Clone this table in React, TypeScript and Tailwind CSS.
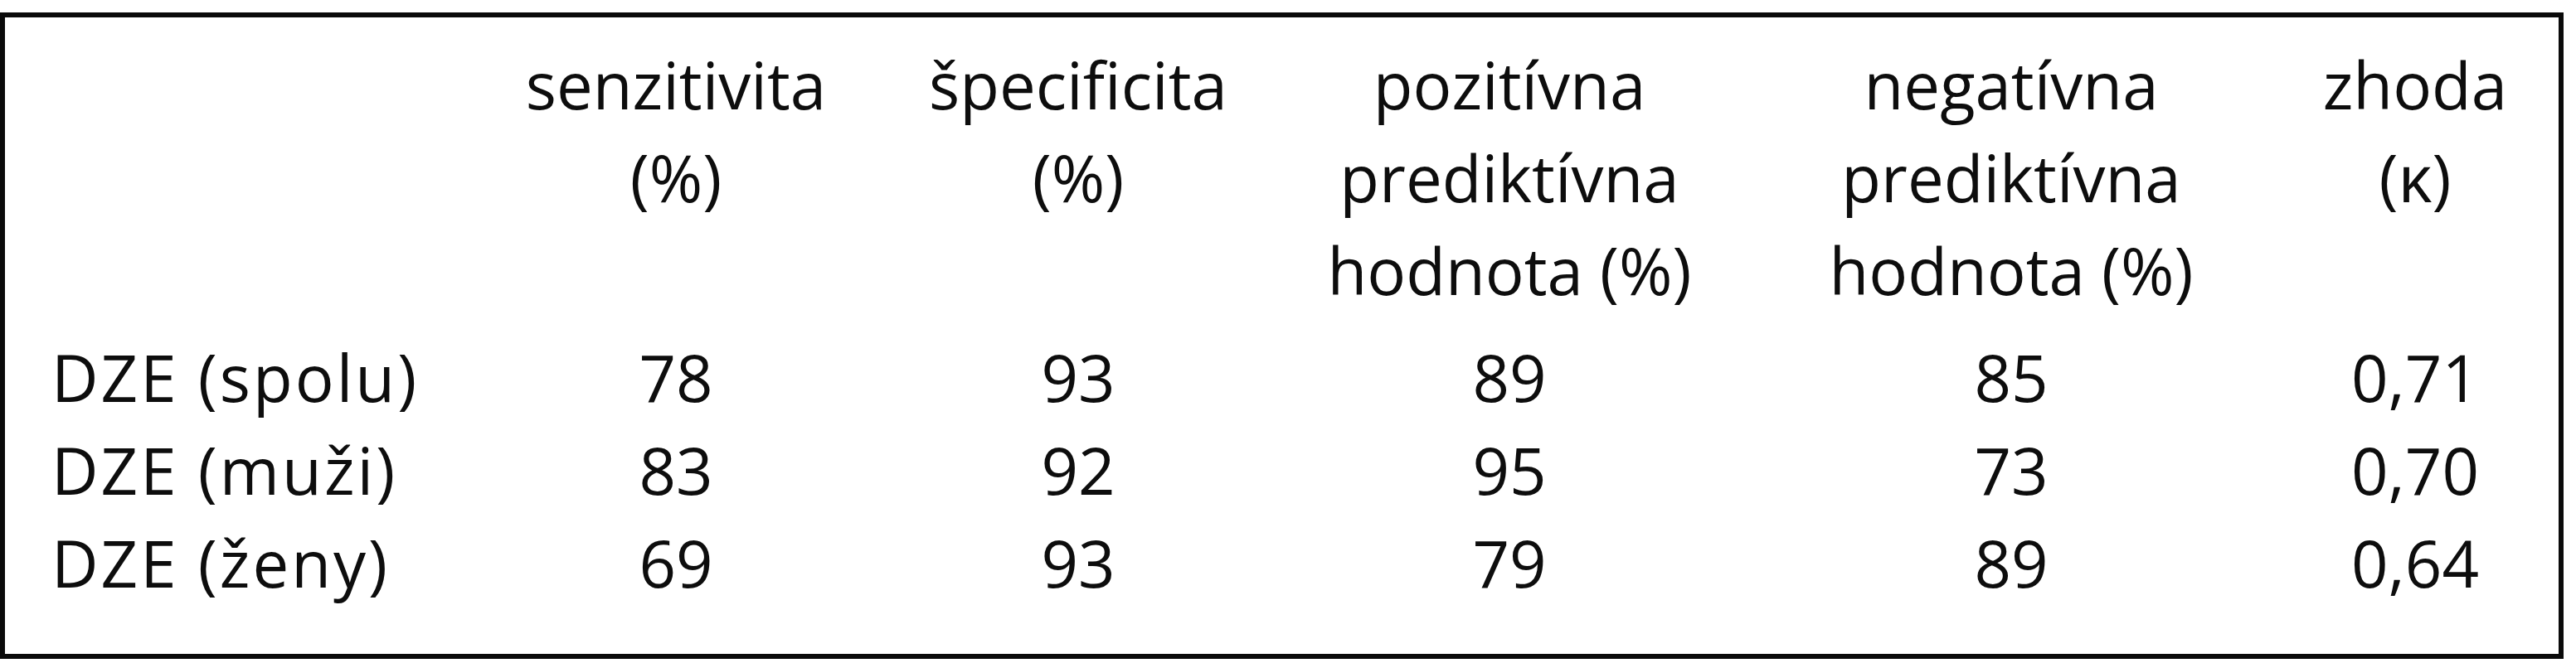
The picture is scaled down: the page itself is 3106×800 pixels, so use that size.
const header: string[][] = [
  ["senzitivita", "(%)"],
  ["špecificita", "(%)"],
  ["pozitívna", "prediktívna", "hodnota (%)"],
  ["negatívna", "prediktívna", "hodnota (%)"],
  ["zhoda", "(κ)"],
];

const rows: string[][] = [
  ["DZE (spolu)", "78", "93", "89", "85", "0,71"],
  ["DZE (muži)", "83", "92", "95", "73", "0,70"],
  ["DZE (ženy)", "69", "93", "79", "89", "0,64"],
];

export default function App() {
  return (
    <div className="w-[3106px] h-[800px] bg-white pt-[15px] font-['Open_Sans','Noto_Sans',sans-serif] text-[78px] leading-[112px] text-[#0d0d0d]">
      <div className="w-[3091px] h-[780px] border-[6px] border-[#0a0a0a] pt-[25px]">
        {/* hlavička */}
        <div className="grid grid-cols-[564px_490px_480px_560px_650px_324px]">
          <div />
          {header.map((lines, i) => (
            <div key={i} className="text-center whitespace-nowrap">
              {lines.map((l) => (
                <div key={l}>{l}</div>
              ))}
            </div>
          ))}
        </div>

        <div className="grid grid-cols-[564px_490px_480px_560px_650px_324px] mt-[17px]">
          {rows.map((r) =>
            r.map((cell, j) => (
              <div
                key={r[0] + j}
                className={j === 0 ? "pl-[56px] tracking-[3px] whitespace-nowrap" : "text-center"}
              >
                {cell}
              </div>
            ))
          )}
        </div>
      </div>
    </div>
  );
}
